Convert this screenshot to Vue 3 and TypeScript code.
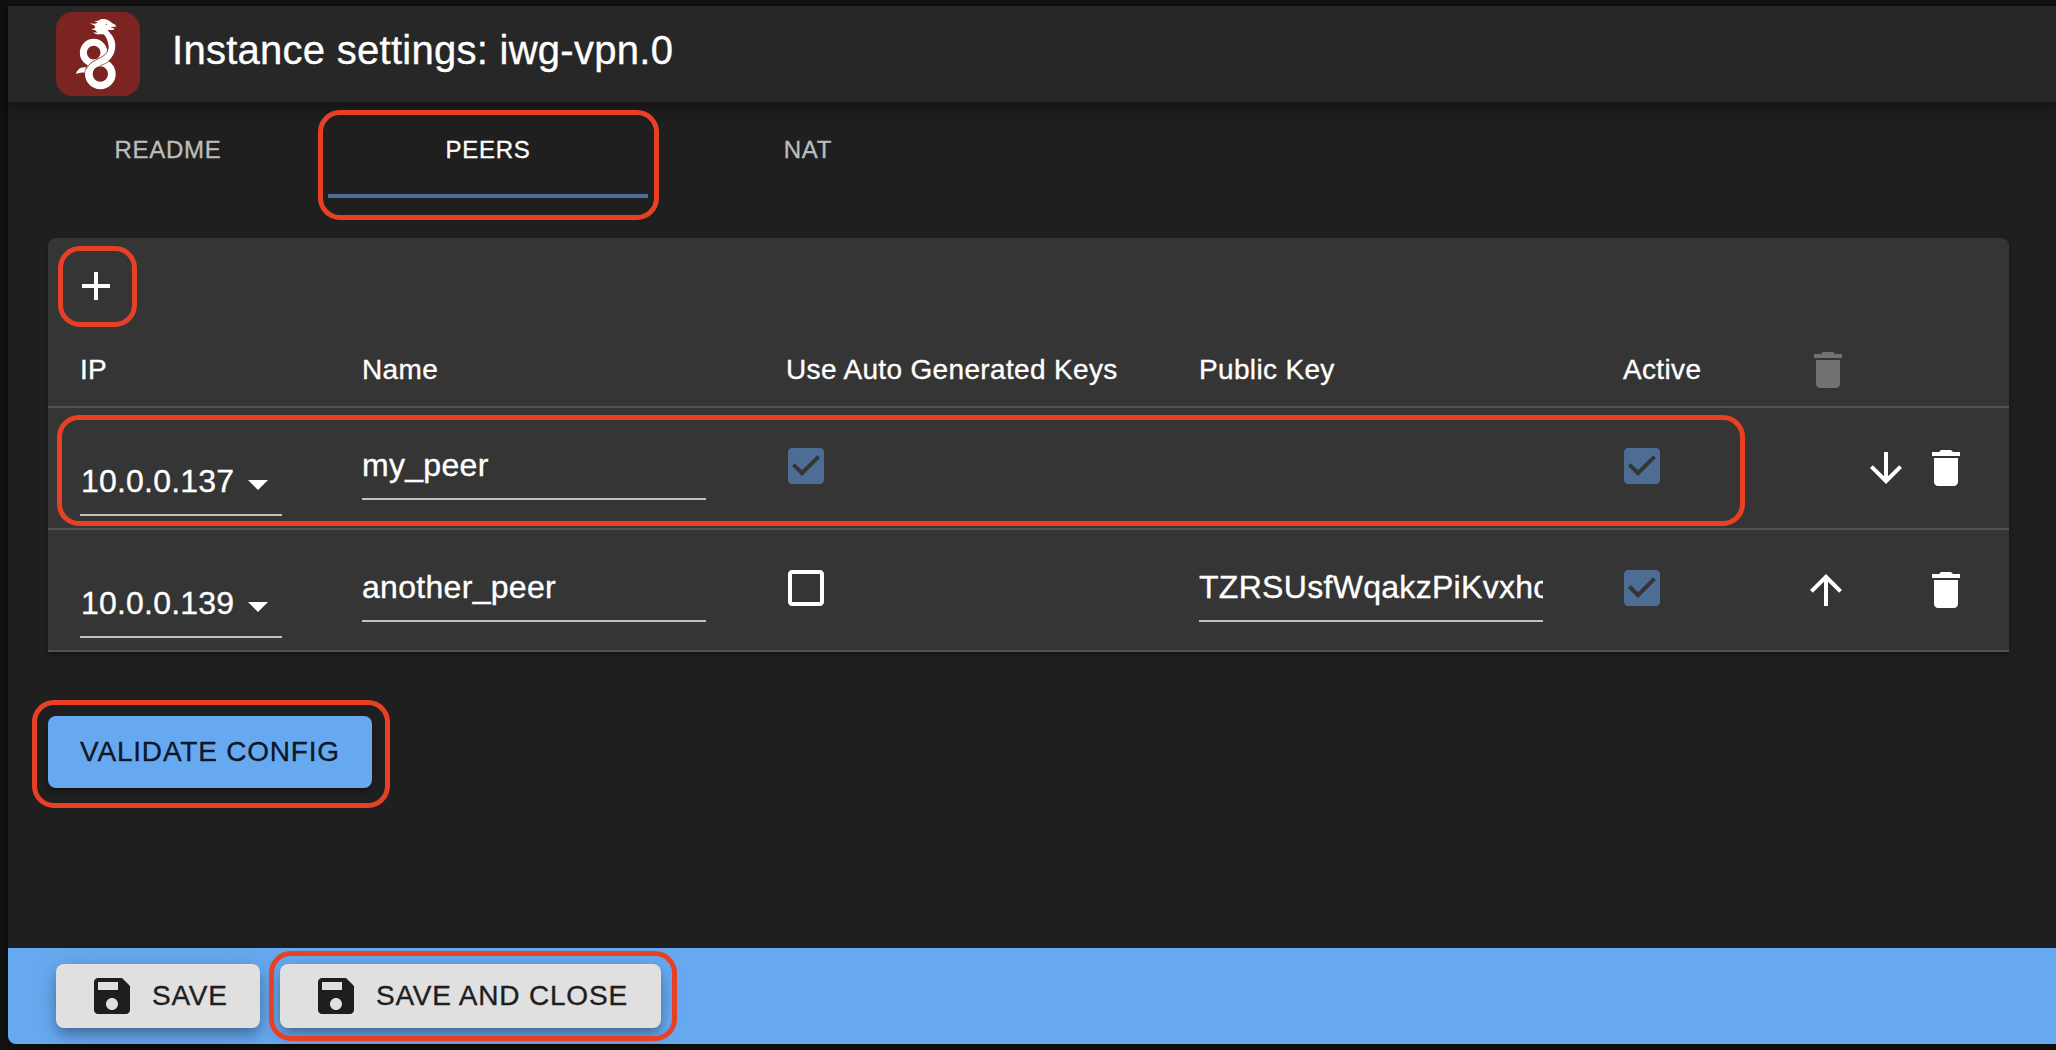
<script setup lang="ts">
interface Peer {
  ip: string
  name: string
  auto: boolean
  publicKey: string
  active: boolean
  marked: boolean
}

const tabs: string[] = ['README', 'PEERS', 'NAT']
const current = 'PEERS'

const peers: Peer[] = [
  { ip: '10.0.0.137', name: 'my_peer', auto: true, publicKey: '', active: true, marked: true },
  { ip: '10.0.0.139', name: 'another_peer', auto: false, publicKey: 'TZRSUsfWqakzPiKvxhc', active: true, marked: false },
]

const icons = {
  add: 'M19 13h-6v6h-2v-6H5v-2h6V5h2v6h6v2z',
  remove: 'M6 19c0 1.1.9 2 2 2h8c1.1 0 2-.9 2-2V7H6v12zM19 4h-3.5l-1-1h-5l-1 1H5v2h14V4z',
  down: 'M20 12l-1.41-1.41L13 16.17V4h-2v12.17l-5.58-5.59L4 12l8 8 8-8z',
  up: 'M4 12l1.41 1.41L11 7.83V20h2V7.83l5.58 5.59L20 12l-8-8-8 8z',
  checked: 'M19 3H5c-1.11 0-2 .9-2 2v14c0 1.1.89 2 2 2h14c1.11 0 2-.9 2-2V5c0-1.1-.89-2-2-2zm-9 14l-5-5 1.41-1.41L10 14.17l7.59-7.59L19 8l-9 9z',
  unchecked: 'M19 5v14H5V5h14m0-2H5c-1.1 0-2 .9-2 2v14c0 1.1.9 2 2 2h14c1.1 0 2-.9 2-2V5c0-1.1-.9-2-2-2z',
  caret: 'M7 10l5 5 5-5z',
  save: 'M17 3H5c-1.11 0-2 .9-2 2v14c0 1.1.89 2 2 2h14c1.1 0 2-.9 2-2V7l-4-4zm-5 16c-1.66 0-3-1.34-3-3s1.34-3 3-3 3 1.34 3 3-1.34 3-3 3zm3-10H5V5h10v4z',
}
</script>

<template>
  <div class="window">
    <div class="app">
      <header class="bar">
        <svg class="logo" viewBox="48 36 252 252">
          <rect x="48" y="36" width="252" height="252" rx="50" fill="#7b2422" />
          <g fill="none" stroke="#fff">
            <circle cx="161" cy="158" r="31" stroke-width="21" />
            <circle cx="181" cy="222" r="34.5" stroke-width="23" />
          </g>
          <path d="M178 90 C190 99 201 112 204 128 C209 150 200 164 180 174 C162 182 146 190 139 206 C152 196 165 192 181 198 C203 187 226 172 226 136 C226 114 213 103 206 94 Z" fill="#fff" />
          <path d="M190 112 C206 126 209 150 196 163 C180 177 150 182 138 208" fill="none" stroke="#7b2422" stroke-width="2.5" />
          <path d="M180 197 C192 193 203 188 212 180" fill="none" stroke="#7b2422" stroke-width="2" />
          <path d="M108 223 C111 208 124 199 139 203 C134 208 134 213 134 218 C125 216 116 218 108 223 Z" fill="#fff" />
          <path d="M162 62 C171 64 176 63 182 58 C194 54 209 60 216 69 L227 75 L228 80 L211 81 L224 86 L220 90 L204 90 C202 94 205 98 211 103 L190 103 L180 103 C170 104 164 102 160 97 L172 98 L166 91 L153 88 C160 87 165 85 166 81 L162 76 L149 70 C158 71 166 72 173 68 C170 65 166 64 162 62 Z" fill="#fff" />
          <circle cx="199" cy="73" r="2" fill="#7b2422" />
        </svg>
        <h1 class="title">Instance settings: iwg-vpn.0</h1>
      </header>

      <nav class="tabs">
        <div v-for="tab in tabs" :key="tab" class="tab" :class="{ selected: tab === current }">
          {{ tab }}
          <span v-if="tab === current" class="callout callout-tab"></span>
        </div>
      </nav>

      <main class="content">
        <section class="paper">
          <div class="toolbar">
            <button class="icon-button">
              <svg class="icon" viewBox="0 0 24 24"><path :d="icons.add" /></svg>
              <span class="callout callout-add"></span>
            </button>
          </div>
          <div class="row head">
            <span>IP</span>
            <span>Name</span>
            <span>Use Auto Generated Keys</span>
            <span>Public Key</span>
            <span>Active</span>
            <span class="head-action">
              <svg class="icon faded" viewBox="0 0 24 24"><path :d="icons.remove" /></svg>
            </span>
          </div>
          <div v-for="(peer, i) in peers" :key="peer.ip" class="row peer">
            <div class="select">
              <span>{{ peer.ip }}</span>
              <svg class="icon" viewBox="0 0 24 24"><path :d="icons.caret" /></svg>
            </div>
            <div class="field">{{ peer.name }}</div>
            <div class="check">
              <svg class="icon" :class="{ on: peer.auto }" viewBox="0 0 24 24">
                <path :d="peer.auto ? icons.checked : icons.unchecked" />
              </svg>
            </div>
            <div><div v-if="!peer.auto" class="field">{{ peer.publicKey }}</div></div>
            <div class="check">
              <svg class="icon" :class="{ on: peer.active }" viewBox="0 0 24 24">
                <path :d="peer.active ? icons.checked : icons.unchecked" />
              </svg>
            </div>
            <div class="actions">
              <span class="slot">
                <svg v-if="i > 0" class="icon" viewBox="0 0 24 24"><path :d="icons.up" /></svg>
              </span>
              <span class="slot">
                <svg v-if="i < peers.length - 1" class="icon" viewBox="0 0 24 24"><path :d="icons.down" /></svg>
              </span>
              <span class="slot">
                <svg class="icon" viewBox="0 0 24 24"><path :d="icons.remove" /></svg>
              </span>
            </div>
            <span v-if="peer.marked" class="callout callout-row"></span>
          </div>
        </section>

        <button class="validate">
          VALIDATE CONFIG
          <span class="callout callout-validate"></span>
        </button>
      </main>

      <footer class="footer">
        <button class="save">
          <svg class="icon" viewBox="0 0 24 24"><path :d="icons.save" /></svg>
          SAVE
        </button>
        <button class="save wide">
          <svg class="icon" viewBox="0 0 24 24"><path :d="icons.save" /></svg>
          SAVE AND CLOSE
          <span class="callout callout-save"></span>
        </button>
      </footer>
    </div>
  </div>
</template>

<style>
body {
  margin: 0;
  background: #121212;
}
</style>

<style scoped>
.window {
  box-sizing: border-box;
  width: 2056px;
  height: 1050px;
  padding: 6px 0 6px 8px;
  overflow: hidden;
  background: #121212;
  color: #fff;
  font-family: "Liberation Sans", Arial, sans-serif;
  -webkit-text-stroke: 0.35px currentColor;
}
.window * {
  box-sizing: border-box;
}
.app {
  display: flex;
  flex-direction: column;
  height: 1038px;
  background: #1f1f1f;
  border-radius: 0 0 0 8px;
  box-shadow: 0 2px 6px rgba(0, 0, 0, 0.6);
}
button {
  position: relative;
  display: flex;
  align-items: center;
  border: 0;
  font-family: inherit;
  white-space: nowrap;
}
.icon {
  display: block;
  flex: none;
  width: 48px;
  height: 48px;
  fill: currentColor;
}
.callout {
  position: absolute;
  border: 5px solid #e84025;
  border-radius: 22px;
  pointer-events: none;
}

.bar {
  display: flex;
  flex: none;
  height: 96px;
  padding: 6px 0 0 48px;
  background: #272727;
  box-shadow: 0 4px 8px -2px rgba(0, 0, 0, 0.2), 0 8px 10px rgba(0, 0, 0, 0.14), 0 2px 20px rgba(0, 0, 0, 0.12);
}
.logo {
  width: 84px;
  height: 84px;
}
.title {
  margin: 6px 0 0 32px;
  font-size: 40px;
  font-weight: 400;
  line-height: 64px;
  letter-spacing: 0.27px;
  white-space: nowrap;
}

.tabs {
  display: flex;
  flex: none;
  height: 96px;
}
.tab {
  position: relative;
  width: 320px;
  padding-top: 32px;
  border-bottom: 4px solid transparent;
  color: #bcbcbc;
  font-size: 24px;
  line-height: 32px;
  letter-spacing: 0.69px;
  text-align: center;
}
.tab.selected {
  border-color: #4d6d95;
  color: #fff;
}
.callout-tab {
  inset: 8px -11px -26px -10px;
}

.content {
  flex: 1;
  padding: 40px 47px 0 40px;
}
.paper {
  height: 414px;
  background: #353535;
  border-radius: 8px 8px 0 0;
  box-shadow: 0 4px 3px -2px rgba(0, 0, 0, 0.3), 0 2px 6px rgba(0, 0, 0, 0.2);
}
.toolbar {
  height: 96px;
  padding: 24px 0 0 24px;
}
.icon-button {
  padding: 0;
  background: none;
  color: #fff;
}
.callout-add {
  inset: -16px -17px -17px -14px;
}
.row {
  position: relative;
  display: grid;
  grid-template-columns: 282px 424px 413px 424px 179px 1fr;
  padding-left: 32px;
  border-bottom: 2px solid #515151;
}
.head {
  height: 74px;
  align-items: center;
  font-size: 28px;
  letter-spacing: 0.34px;
}
.head-action {
  padding-left: 2px;
}
.faded {
  color: #727272;
}
.peer {
  height: 122px;
}
.select {
  display: flex;
  align-items: center;
  width: 202px;
  height: 62px;
  margin-top: 46px;
  border-bottom: 2px solid #c2c2c2;
  font-size: 32px;
  line-height: 38px;
  letter-spacing: 0.2px;
}
.select span {
  padding: 0 0 7px 1px;
}
.select .icon {
  margin: -1px 0 0 0;
}
.field {
  width: 344px;
  height: 62px;
  margin-top: 30px;
  padding-top: 8px;
  overflow: hidden;
  border-bottom: 2px solid #c2c2c2;
  font-size: 32px;
  line-height: 38px;
  letter-spacing: 0.3px;
}
.check {
  padding: 34px 0 0;
  margin-left: -4px;
}
.check:nth-child(5) {
  margin-left: -5px;
}
.on {
  color: #4d6d95;
}
.actions {
  display: flex;
  padding-top: 36px;
}
.slot {
  width: 60px;
}
.callout-row {
  left: 9px;
  right: 264px;
  top: 7px;
  bottom: 2px;
}

.validate {
  justify-content: center;
  width: 324px;
  height: 72px;
  margin-top: 64px;
  padding: 0;
  border-radius: 8px;
  background: #67a9f0;
  color: rgba(0, 0, 0, 0.87);
  font-size: 28px;
  letter-spacing: 0.8px;
  box-shadow: 0 6px 2px -4px rgba(0, 0, 0, 0.2), 0 4px 4px rgba(0, 0, 0, 0.14), 0 2px 10px rgba(0, 0, 0, 0.12);
}
.callout-validate {
  inset: -16px -18px -20px -16px;
}

.footer {
  display: flex;
  flex: none;
  gap: 20px;
  height: 96px;
  padding: 16px 0 0 48px;
  border-radius: 0 0 0 8px;
  background: #67a9f0;
}
.save {
  gap: 16px;
  width: 204px;
  height: 64px;
  padding: 0 0 0 32px;
  border-radius: 8px;
  background: #e0e0e0;
  color: #1e1e1e;
  font-size: 28px;
  letter-spacing: 0.8px;
  box-shadow: 0 6px 10px -2px rgba(0, 0, 0, 0.2), 0 10px 16px rgba(0, 0, 0, 0.14), 0 2px 28px rgba(0, 0, 0, 0.12);
}
.wide {
  width: 381px;
}
.callout-save {
  inset: -13px -16px -13px -11px;
}
</style>
